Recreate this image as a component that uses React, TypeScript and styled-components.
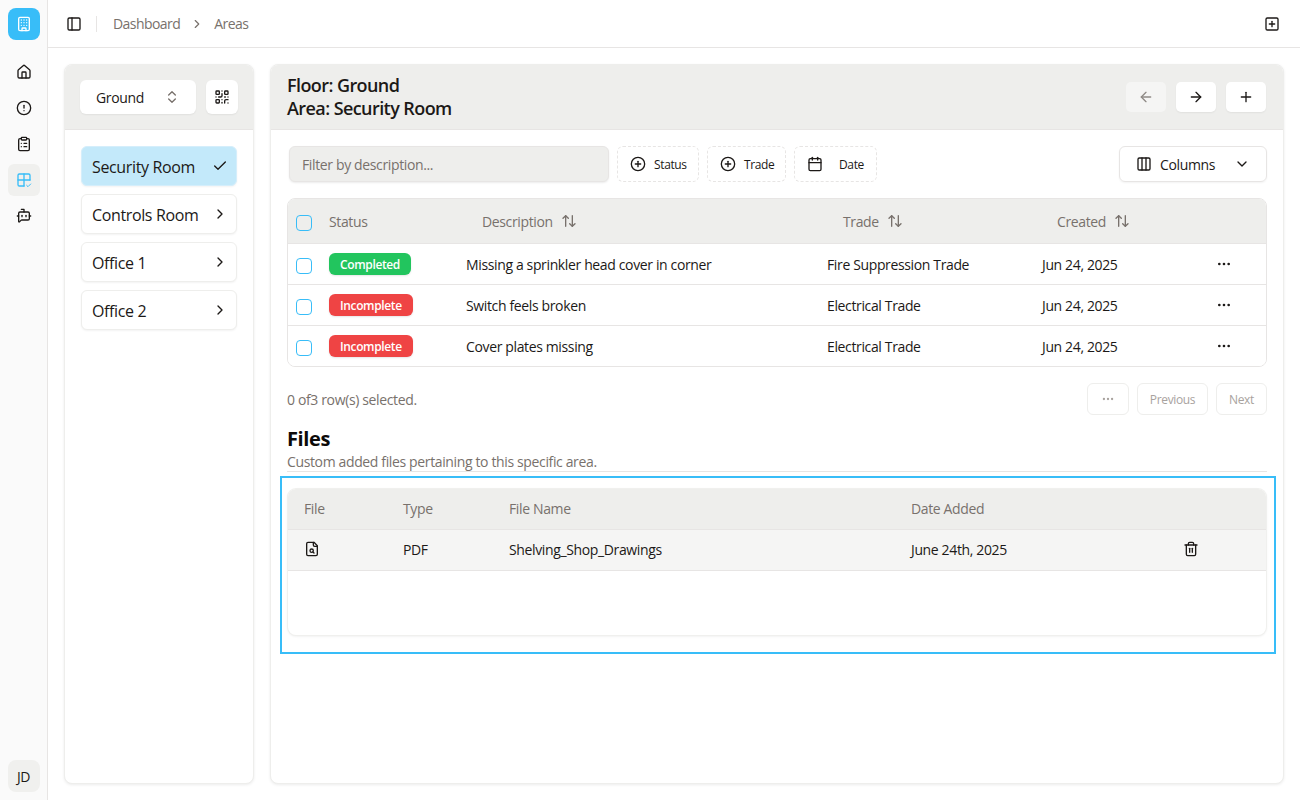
import React from "react";
import styled, { createGlobalStyle } from "styled-components";
import {
  PanelLeft, House, CircleAlert, ClipboardList, BotMessageSquare, ChevronsUpDown, QrCode, Check,
  ChevronRight, ArrowLeft, ArrowRight, Plus, CirclePlus, Calendar, Columns3, ChevronDown,
  ArrowUpDown, Ellipsis, Trash2, SquarePlus, Building,
} from "lucide-react";

const Global = createGlobalStyle`
  html, body { margin: 0; padding: 0; background: #fff; }
  body { font-family: "Open Sans", "Noto Sans", sans-serif; font-size: 14px; color: #1c1917; letter-spacing: -0.026em; }
  * { box-sizing: border-box; }
`;

const Shell = styled.div`display: flex; width: 1300px; height: 800px; overflow: hidden;`;
const Rail = styled.nav`
  width: 48px; flex: none; background: #fafafa; border-right: 1px solid #e7e5e4;
  display: flex; flex-direction: column; align-items: center; padding: 8px 0;
`;
const Logo = styled.div`
  width: 32px; height: 32px; border-radius: 8px; background: #38bdf8; color: #fff;
  display: flex; align-items: center; justify-content: center; margin-bottom: 16px;
`;
const RailItem = styled.div<{ $active?: boolean }>`
  width: 32px; height: 32px; border-radius: 6px; margin-bottom: 4px;
  display: flex; align-items: center; justify-content: center;
  background: ${(p) => (p.$active ? "#f0f0ee" : "transparent")};
  color: ${(p) => (p.$active ? "#38bdf8" : "#1c1917")};
`;
const Avatar = styled.div`
  width: 32px; height: 32px; border-radius: 8px; background: #f0f0ee; margin-top: auto;
  display: flex; align-items: center; justify-content: center; font-size: 14px;
`;
const Main = styled.div`flex: 1; min-width: 0; display: flex; flex-direction: column;`;
const TopBar = styled.header`
  height: 48px; flex: none; border-bottom: 1px solid #e7e5e4; display: flex; align-items: center;
  padding: 0 20px 0 18px; color: #1c1917;
`;
const Divider = styled.span`width: 1px; height: 16px; background: #e7e5e4; margin: 0 16px 0 14px;`;
const Crumb = styled.span`color: #78716c; font-size: 14px; letter-spacing: -0.04em;`;
const CrumbSep = styled.span`display: flex; color: #78716c; margin: 0 10px 0 10px;`;
const TopEnd = styled.span`margin-left: auto; display: flex;`;
const Body = styled.div`flex: 1; min-height: 0; display: flex; gap: 16px; padding: 16px;`;
const Panel = styled.section<{ $w?: number }>`
  ${(p) => (p.$w ? `width: ${p.$w}px; flex: none;` : "flex: 1; min-width: 0;")}
  border: 1px solid #eeeeec; border-radius: 8px; background: #fff;
  box-shadow: 0 1px 3px rgba(0,0,0,.08); overflow: hidden; display: flex; flex-direction: column;
`;
const PanelHead = styled.div<{ $left: number }>`
  height: 65px; flex: none; background: #eeeeec; border-bottom: 1px solid #e7e5e4;
  display: flex; align-items: center; padding: 0 16px 0 ${(p) => p.$left}px;
`;
const FloorSelect = styled.div`
  flex: none; width: 116px; height: 34px; border-radius: 6px; background: #fff; box-shadow: 0 1px 2px rgba(0,0,0,.06);
  display: flex; align-items: center; justify-content: space-between; padding: 0 16px; font-size: 14px;
  svg { color: #78716c; }
`;
const QrButton = styled.div`
  flex: none; width: 32px; height: 34px; border-radius: 6px; background: #fff; margin-left: 10px;
  box-shadow: 0 1px 2px rgba(0,0,0,.06); display: flex; align-items: center; justify-content: center;
`;
const AreaList = styled.div`display: flex; flex-direction: column; gap: 8px; padding: 16px;`;
const AreaItem = styled.div<{ $active?: boolean }>`
  height: 40px; border-radius: 6px; padding: 0 8px 0 10px; font-size: 16px;
  display: flex; align-items: center; justify-content: space-between;
  border: 1px solid ${(p) => (p.$active ? "#d5eefb" : "#eeeeec")};
  background: ${(p) => (p.$active ? "#c3e9fa" : "#fff")};
  box-shadow: 0 1px 2px rgba(0,0,0,.05);
`;
const AreaLabel = styled.span`padding-top: 2px;`;
const HeadTitle = styled.h1`margin: 0; font-size: 18px; font-weight: 600; line-height: 23px; color: #1c1917; letter-spacing: -0.032em;`;
const HeadActions = styled.div`margin-left: auto; display: flex; gap: 10px; padding-right: 1px;`;
const IconButton = styled.div<{ $disabled?: boolean }>`
  width: 40px; height: 30px; border-radius: 5px; display: flex; align-items: center; justify-content: center;
  background: ${(p) => (p.$disabled ? "#f5f5f4" : "#fff")};
  color: ${(p) => (p.$disabled ? "#8f8a86" : "#1c1917")};
  box-shadow: ${(p) => (p.$disabled ? "none" : "0 1px 2px rgba(0,0,0,.06)")};
`;
const Content = styled.div`padding: 16px; display: flex; flex-direction: column;`;
const Toolbar = styled.div`display: flex; align-items: center; gap: 8px; height: 36px; margin-bottom: 16px;`;
const FilterInput = styled.div`
  width: 320px; height: 36px; margin-left: 2px; border-radius: 6px; background: #eeeeec; color: #78716c;
  border: 1px solid #e7e5e4; box-shadow: 0 1px 2px rgba(0,0,0,.08); display: flex; align-items: center;
  padding: 0 12px; font-size: 14px;
`;
const FacetButton = styled.div<{ $w: number; $gap?: number }>`
  width: ${(p) => p.$w}px; height: 36px; border: 1px dashed #e7e5e4; border-radius: 6px;
  display: flex; align-items: center; padding-left: 12px; gap: ${(p) => p.$gap ?? 8}px; font-size: 12px;
`;
const ColumnsButton = styled.div`
  margin-left: auto; width: 148px; height: 36px; border: 1px solid #e7e5e4; border-radius: 6px;
  display: flex; align-items: center; padding: 0 16px; font-size: 14px; box-shadow: 0 1px 2px rgba(0,0,0,.05);
  span { margin: 0 auto 0 8px; }
`;
const TableFrame = styled.div`border: 1px solid #e7e5e4; border-radius: 8px; overflow: hidden;`;
const IssueRow = styled.div<{ $head?: boolean }>`
  display: grid; grid-template-columns: 33px 137px 361px 214px 1fr; align-items: center;
  height: ${(p) => (p.$head ? 45 : 41)}px;
  border-bottom: 1px solid #e7e5e4;
  background: ${(p) => (p.$head ? "#eeeeec" : "#fff")};
  &:last-child { border-bottom: 0; height: 40px; }
`;
const Tick = styled.span`
  width: 16px; height: 16px; margin: 4px 0 0 8px; border: 1px solid #38bdf8; border-radius: 4px; display: block;
`;
const HeadCell = styled.div`color: #78716c; padding-left: 8px; display: flex; align-items: center; gap: 8px;`;
const SortCell = styled(HeadCell)`padding-left: 24px;`;
const Cell = styled.div`padding-left: 8px; color: #1c1917;`;
const DateCell = styled(Cell)`display: grid; grid-template-columns: 174px 1fr; align-items: center; padding-left: 9px;`;
const Badge = styled.span<{ $done?: boolean }>`
  display: inline-flex; align-items: center; height: 22px; padding: 0 11px; border-radius: 6px; color: #fff;
  font-size: 12px; font-weight: 600; background: ${(p) => (p.$done ? "#22c55e" : "#ef4444")};
  box-shadow: 0 1px 2px rgba(0,0,0,.1); vertical-align: middle;
`;
const PagerRow = styled.div`display: flex; align-items: center; margin-top: 16px; height: 32px;`;
const PagerText = styled.span`color: #78716c; font-size: 14px;`;
const Pager = styled.div`margin-left: auto; display: flex; gap: 8px;`;
const PagerButton = styled.div<{ $w: number }>`
  width: ${(p) => p.$w}px; height: 32px; border: 1px solid #eeeeec; border-radius: 6px; color: #a8a29e;
  display: flex; align-items: center; justify-content: center; font-size: 12px;
`;
const FilesTitle = styled.h2`margin: 10px 0 0; font-size: 20px; font-weight: 700; line-height: 28px; color: #0c0a09;`;
const FilesNote = styled.p`
  margin: 0; color: #78716c; font-size: 14px; line-height: 18px; border-bottom: 1px solid #e7e5e4; height: 19px;
`;
const Highlight = styled.div`
  margin: 4px -9px 0 -7px; padding: 11px 8px 17px 6px; border: 2px solid #38bdf8;
`;
const FilesCard = styled.div`
  height: 146px; border-radius: 8px; overflow: hidden; background: #fff;
  box-shadow: 0 0 0 1px #f0f0ee, 0 1px 3px rgba(0,0,0,.1);
`;
const FileRow = styled.div<{ $head?: boolean }>`
  display: grid; grid-template-columns: 115px 106px 402px 272px 1fr; align-items: center; height: 41px;
  padding-bottom: 2px; border-bottom: 1px solid #e7e5e4;
  background: ${(p) => (p.$head ? "#eeeeec" : "#f5f5f4")};
  color: ${(p) => (p.$head ? "#78716c" : "#1c1917")};
  & > div:first-child { padding-left: 16px; }
`;
const FileCell = styled.div`display: flex; align-items: center;`;

const issues = [
  { s: "Completed", d: "Missing a sprinkler head cover in corner", t: "Fire Suppression Trade" },
  { s: "Incomplete", d: "Switch feels broken", t: "Electrical Trade" },
  { s: "Incomplete", d: "Cover plates missing", t: "Electrical Trade" },
];

const GridCheck = () => (
  <svg width="16" height="16" viewBox="0 0 24 24" fill="none" stroke="currentColor" strokeWidth="2" strokeLinecap="round" strokeLinejoin="round">
    <path d="M12 3v18" /><path d="M3 12h18" />
    <path d="M21 12V5a2 2 0 0 0-2-2H5a2 2 0 0 0-2 2v14a2 2 0 0 0 2 2h7" />
    <path d="m16 20 2 2 4-4" strokeWidth="1.5" />
  </svg>
);

const FileMagnify = () => (
  <svg width="16" height="16" viewBox="0 0 24 24" fill="none" stroke="currentColor" strokeWidth="2" strokeLinecap="round" strokeLinejoin="round">
    <path d="M15 2H6a2 2 0 0 0-2 2v16a2 2 0 0 0 2 2h12a2 2 0 0 0 2-2V7z" />
    <path d="M14 2v4a2 2 0 0 0 2 2h4" />
    <circle cx="11.5" cy="14.5" r="2.5" />
    <path d="M13.3 16.3 15 18" />
  </svg>
);

export default function App() {
  return (
    <>
      <Global />
      <Shell>
        <Rail>
          <Logo><Building size={16} /></Logo>
          <RailItem><House size={16} /></RailItem>
          <RailItem><CircleAlert size={16} /></RailItem>
          <RailItem><ClipboardList size={16} /></RailItem>
          <RailItem $active><GridCheck /></RailItem>
          <RailItem><BotMessageSquare size={16} /></RailItem>
          <Avatar>JD</Avatar>
        </Rail>
        <Main>
          <TopBar>
            <PanelLeft size={16} />
            <Divider />
            <Crumb>Dashboard</Crumb>
            <CrumbSep><ChevronRight size={14} /></CrumbSep>
            <Crumb>Areas</Crumb>
            <TopEnd><SquarePlus size={16} /></TopEnd>
          </TopBar>
          <Body>
            <Panel $w={190}>
              <PanelHead $left={15}>
                <FloorSelect>Ground<ChevronsUpDown size={16} /></FloorSelect>
                <QrButton><QrCode size={16} /></QrButton>
              </PanelHead>
              <AreaList>
                <AreaItem $active><AreaLabel>Security Room</AreaLabel><Check size={16} /></AreaItem>
                <AreaItem><AreaLabel>Controls Room</AreaLabel><ChevronRight size={16} /></AreaItem>
                <AreaItem><AreaLabel>Office 1</AreaLabel><ChevronRight size={16} /></AreaItem>
                <AreaItem><AreaLabel>Office 2</AreaLabel><ChevronRight size={16} /></AreaItem>
              </AreaList>
            </Panel>
            <Panel>
              <PanelHead $left={16}>
                <HeadTitle>Floor: Ground<br />Area: Security Room</HeadTitle>
                <HeadActions>
                  <IconButton $disabled><ArrowLeft size={16} /></IconButton>
                  <IconButton><ArrowRight size={16} /></IconButton>
                  <IconButton><Plus size={16} /></IconButton>
                </HeadActions>
              </PanelHead>
              <Content>
                <Toolbar>
                  <FilterInput>Filter by description...</FilterInput>
                  <FacetButton $w={82}><CirclePlus size={16} />Status</FacetButton>
                  <FacetButton $w={79}><CirclePlus size={16} />Trade</FacetButton>
                  <FacetButton $w={83} $gap={16}><Calendar size={16} />Date</FacetButton>
                  <ColumnsButton><Columns3 size={16} /><span>Columns</span><ChevronDown size={16} /></ColumnsButton>
                </Toolbar>
                <TableFrame>
                  <IssueRow $head>
                    <Tick />
                    <HeadCell>Status</HeadCell>
                    <SortCell>Description<ArrowUpDown size={16} /></SortCell>
                    <SortCell>Trade<ArrowUpDown size={16} /></SortCell>
                    <SortCell>Created<ArrowUpDown size={16} /></SortCell>
                  </IssueRow>
                  {issues.map((r) => (
                    <IssueRow key={r.d}>
                      <Tick />
                      <Cell><Badge $done={r.s === "Completed"}>{r.s}</Badge></Cell>
                      <Cell>{r.d}</Cell>
                      <Cell>{r.t}</Cell>
                      <DateCell>Jun 24, 2025<Ellipsis size={16} /></DateCell>
                    </IssueRow>
                  ))}
                </TableFrame>
                <PagerRow>
                  <PagerText>0 of3 row(s) selected.</PagerText>
                  <Pager>
                    <PagerButton $w={42}><Ellipsis size={14} /></PagerButton>
                    <PagerButton $w={71}>Previous</PagerButton>
                    <PagerButton $w={51}>Next</PagerButton>
                  </Pager>
                </PagerRow>
                <FilesTitle>Files</FilesTitle>
                <FilesNote>Custom added files pertaining to this specific area.</FilesNote>
                <Highlight>
                  <FilesCard>
                    <FileRow $head>
                      <FileCell>File</FileCell><FileCell>Type</FileCell><FileCell>File Name</FileCell><FileCell>Date Added</FileCell><FileCell />
                    </FileRow>
                    <FileRow>
                      <FileCell><FileMagnify /></FileCell>
                      <FileCell>PDF</FileCell>
                      <FileCell>Shelving_Shop_Drawings</FileCell>
                      <FileCell>June 24th, 2025</FileCell>
                      <FileCell><Trash2 size={16} /></FileCell>
                    </FileRow>
                  </FilesCard>
                </Highlight>
              </Content>
            </Panel>
          </Body>
        </Main>
      </Shell>
    </>
  );
}
